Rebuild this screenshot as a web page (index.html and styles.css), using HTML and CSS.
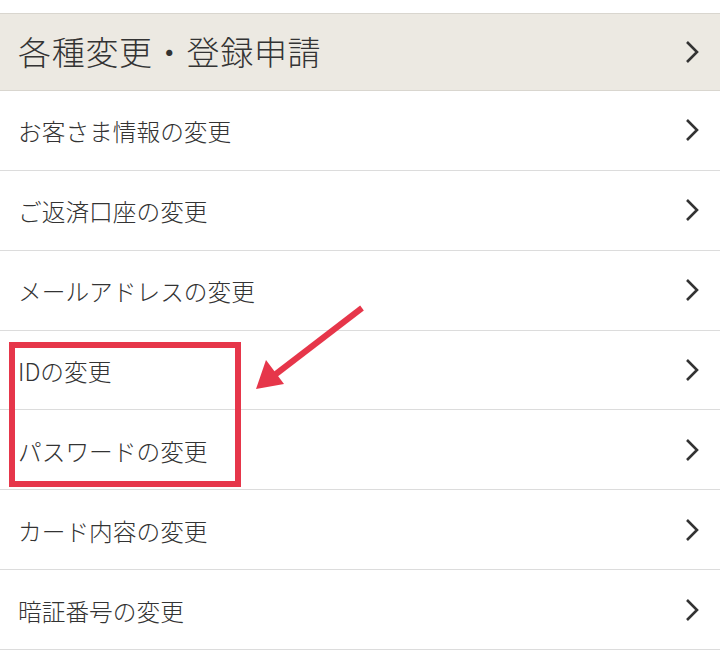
FILE: index.html
```html
<!DOCTYPE html>
<html lang="ja">
<head>
    <meta charset="UTF-8">
    <meta name="viewport" content="width=device-width, initial-scale=1.0">
    <title>各種変更・登録申請</title>
    <link rel="stylesheet" href="styles.css">
</head>
<body>
    <div class="menu">
        <a class="menu-head" href="#">
            <span>各種変更・登録申請</span>
            <svg class="chev" viewBox="0 0 14 24"><path d="M2 2 L12 12 L2 22"/></svg>
        </a>
        <ul class="menu-list">
            <li><a href="#"><span>お客さま情報の変更</span><svg class="chev" viewBox="0 0 14 24"><path d="M2 2 L12 12 L2 22"/></svg></a></li>
            <li><a href="#"><span>ご返済口座の変更</span><svg class="chev" viewBox="0 0 14 24"><path d="M2 2 L12 12 L2 22"/></svg></a></li>
            <li><a href="#"><span>メールアドレスの変更</span><svg class="chev" viewBox="0 0 14 24"><path d="M2 2 L12 12 L2 22"/></svg></a></li>
            <li><a href="#"><span>IDの変更</span><svg class="chev" viewBox="0 0 14 24"><path d="M2 2 L12 12 L2 22"/></svg></a></li>
            <li><a href="#"><span>パスワードの変更</span><svg class="chev" viewBox="0 0 14 24"><path d="M2 2 L12 12 L2 22"/></svg></a></li>
            <li><a href="#"><span>カード内容の変更</span><svg class="chev" viewBox="0 0 14 24"><path d="M2 2 L12 12 L2 22"/></svg></a></li>
            <li><a href="#"><span>暗証番号の変更</span><svg class="chev" viewBox="0 0 14 24"><path d="M2 2 L12 12 L2 22"/></svg></a></li>
        </ul>

        <!-- annotation over the list -->
        <div class="highlight"></div>
        <svg class="arrow" viewBox="0 0 720 654">
            <line x1="362" y1="308" x2="272" y2="377"/>
            <polygon points="256,389 266,360 284,384"/>
        </svg>
    </div>
</body>
</html>
```

FILE: styles.css
```css
body {
    margin: 0;
    background: #fff;
    font-family: "Noto Sans CJK JP", "Noto Sans", sans-serif;
    color: #333;
}
.menu {
    position: relative;
    padding-top: 13px;
}
.menu a {
    display: flex;
    align-items: center;
    justify-content: space-between;
    color: #333;
    text-decoration: none;
}
.menu-head {
    height: 76px;
    padding: 0 21px 0 18px;
    background: #ece9e2;
    border-top: 1px solid #d9d6cf;
    border-bottom: 1px solid #d9d6cf;
    font-size: 33px;
    font-weight: 300;
    letter-spacing: 0.7px;
}
.menu-head span {
    margin-top: -3px;
}
.menu-list {
    list-style: none;
    margin: 0;
    padding: 0;
}
.menu-list li a {
    height: 78.86px;
    padding: 0 21px 0 18px;
    border-bottom: 1px solid #dcdcdc;
    font-size: 23.7px;
    font-weight: 300;
}
.menu-list li a span {
    margin-top: 2px;
}
.chev {
    width: 14px;
    height: 24px;
    fill: none;
    stroke: #333;
    stroke-width: 2.6;
}
.highlight {
    position: absolute;
    left: 9px;
    top: 342px;
    width: 220px;
    height: 133px;
    border: 6px solid #e6364a;
}
.arrow {
    position: absolute;
    left: 0;
    top: 0;
    width: 720px;
    height: 654px;
    pointer-events: none;
}
.arrow line {
    stroke: #e6364a;
    stroke-width: 6;
}
.arrow polygon {
    fill: #e6364a;
}
```
